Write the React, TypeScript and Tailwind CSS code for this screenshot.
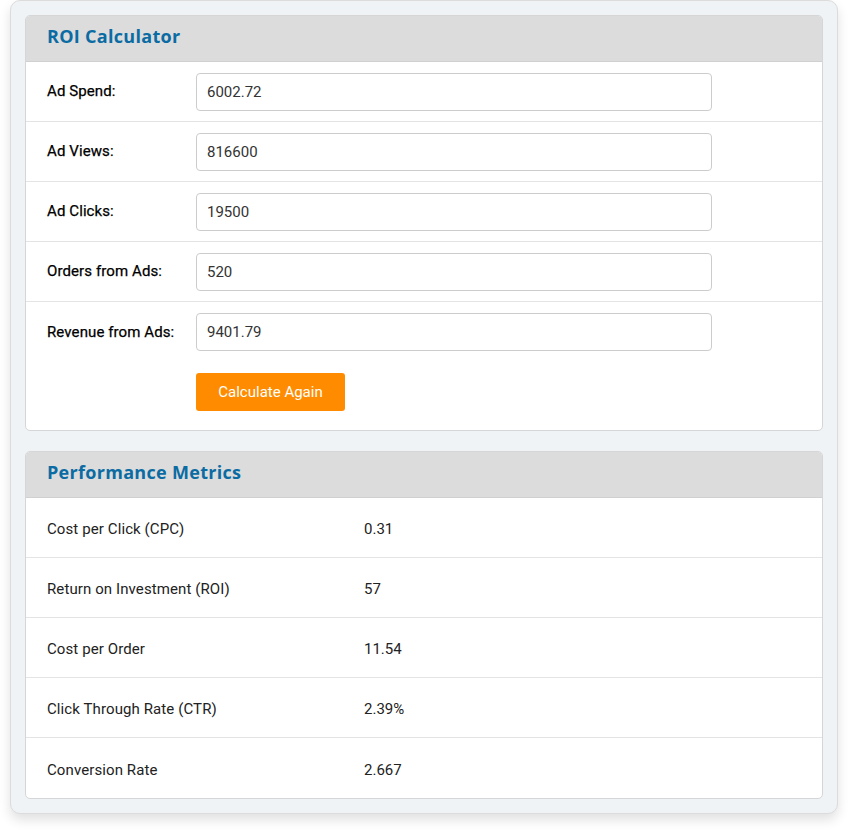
import React from "react";

const inputs = [
  { label: "Ad Spend:", value: "6002.72" },
  { label: "Ad Views:", value: "816600" },
  { label: "Ad Clicks:", value: "19500" },
  { label: "Orders from Ads:", value: "520" },
  { label: "Revenue from Ads:", value: "9401.79" },
];

const metrics = [
  { label: "Cost per Click (CPC)", value: "0.31" },
  { label: "Return on Investment (ROI)", value: "57" },
  { label: "Cost per Order", value: "11.54" },
  { label: "Click Through Rate (CTR)", value: "2.39%" },
  { label: "Conversion Rate", value: "2.667" },
];

export default function App() {
  return (
    <div className="w-[848px] h-[834px] bg-white" style={{ fontFamily: "Roboto, 'Liberation Sans', sans-serif" }}>
      <div className="ml-[10px] w-[828px] h-[814px] rounded-[10px] border border-[#dcdcdc] bg-[#eff3f6] p-[14px] shadow-[0_6px_12px_rgba(0,0,0,0.12)]">
        <div className="rounded-[5px] border border-[#d6d6d6] bg-white overflow-hidden">
          <div className="h-[46px] bg-[#dcdcdc] flex items-center px-[21px] pb-[5px] border-b border-[#d0d0d0]">
            <h2 className="text-[18px] font-bold text-[#0b6ba3] tracking-[0.3px]" style={{ fontFamily: "'Open Sans', Roboto, sans-serif" }}>ROI Calculator</h2>
          </div>
          {inputs.map((r, i) => (
            <div key={r.label} className={`h-[60px] flex items-center px-[21px] ${i < inputs.length - 1 ? "border-b border-[#e4e4e4]" : ""}`}>
              <label className="w-[149px] text-[15px] text-black tracking-[0.1px] [-webkit-text-stroke:0.25px_black]">{r.label}</label>
              <input
                readOnly
                value={r.value}
                className="w-[516px] h-[38px] rounded-[4px] border border-[#cccccc] px-[10px] text-[15px] text-[#333] outline-none"
              />
            </div>
          ))}
          <div className="pl-[170px] pt-[11px] pb-[19px]">
            <button className="w-[149px] h-[38px] rounded-[3px] bg-[#ff8c00] text-white text-[15px]">Calculate Again</button>
          </div>
        </div>
        <div className="mt-[20px] rounded-[5px] border border-[#d6d6d6] bg-white overflow-hidden">
          <div className="h-[46px] bg-[#dcdcdc] flex items-center px-[21px] pb-[4px] border-b border-[#d0d0d0]">
            <h2 className="text-[18px] font-bold text-[#0b6ba3] tracking-[0.3px]" style={{ fontFamily: "'Open Sans', Roboto, sans-serif" }}>Performance Metrics</h2>
          </div>
          {metrics.map((r, i) => (
            <div key={r.label} className={`h-[60px] flex items-center px-[21px] pt-[4px] ${i < metrics.length - 1 ? "border-b border-[#e4e4e4]" : ""}`}>
              <div className="w-[317px] text-[15px] text-[#222] tracking-[0.1px]">{r.label}</div>
              <div className="text-[15px] text-[#222]">{r.value}</div>
            </div>
          ))}
        </div>
      </div>
    </div>
  );
}
